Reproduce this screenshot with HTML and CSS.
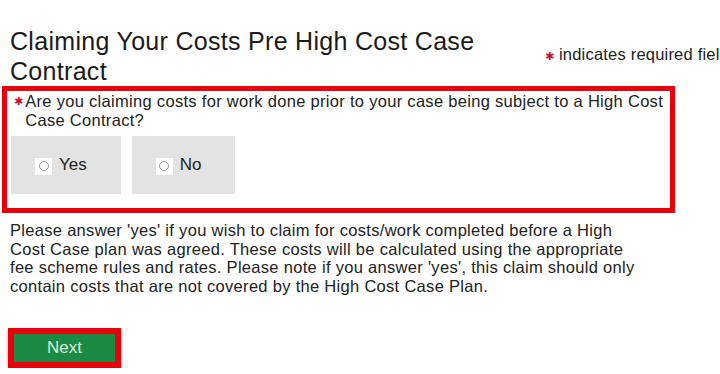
FILE: index.html
```html
<!DOCTYPE html>
<html>
<head>
  <title>Claiming Your Costs Pre High Cost Case Contract</title>
  <link rel="stylesheet" href="styles.css">
</head>
<body>
  <div class="header">
    <h1 class="title">Claiming Your Costs Pre High Cost Case Contract</h1>
    <div class="required-note"><span class="star">&#10033;</span> indicates required field</div>
  </div>

  <div class="question-box">
    <div class="question">
      <span class="star">&#10033;</span>
      <span>Are you claiming costs for work done prior to your case being subject to a High Cost Case Contract?</span>
    </div>
    <div class="options">
      <label class="option"><span class="radio"><span class="dot"></span></span>Yes</label>
      <label class="option"><span class="radio"><span class="dot"></span></span>No</label>
    </div>
  </div>

  <p class="help">Please answer 'yes' if you wish to claim for costs/work completed before a High Cost Case plan was agreed. These costs will be calculated using the appropriate fee scheme rules and rates. Please note if you answer 'yes', this claim should only contain costs that are not covered by the High Cost Case Plan.</p>

  <div class="actions">
    <button class="next">Next</button>
  </div>
</body>
</html>
```

FILE: styles.css
```css
body {
  margin: 0;
  padding: 0 0 0 2px;
  font-family: 'Liberation Sans', Arial, sans-serif;
  color: #222;
  background-color: #fff;
  overflow: hidden;
}

.header {
  display: flex;
  margin-top: 26px;
  padding-left: 8px;
}

.title {
  flex-shrink: 0;
  width: 490px;
  margin: 0;
  font-size: 25px;
  font-weight: normal;
  letter-spacing: 0.3px;
  line-height: 30px;
  color: #1a1a1a;
}

.required-note {
  flex-shrink: 0;
  margin-top: 19px;
  margin-left: 45px;
  font-size: 16.5px;
  letter-spacing: 0.2px;
  line-height: 18px;
  white-space: nowrap;
}

.star {
  color: #c8102e;
  font-family: 'DejaVu Sans', sans-serif;
  font-size: 11px;
  letter-spacing: 0;
}

.question-box {
  width: 659px;
  border: 5px solid #e8000b;
  padding: 1px 0 14px 4px;
}

.question {
  display: flex;
  align-items: flex-start;
  gap: 2px;
  margin-left: 3px;
  padding-right: 4px;
  font-size: 16.5px;
  letter-spacing: 0.3px;
  line-height: 19px;
}

.options {
  display: flex;
  gap: 11px;
  margin-top: 6px;
}

.option {
  display: flex;
  align-items: center;
  gap: 7px;
  height: 58px;
  padding: 0 34px 0 24px;
  background-color: #e3e3e3;
  font-size: 17px;
}

.radio {
  display: flex;
  align-items: center;
  justify-content: center;
  width: 17px;
  height: 17px;
  background-color: #fff;
  margin-top: 2px;
}

.dot {
  width: 8px;
  height: 8px;
  border: 1px solid #999;
  border-radius: 50%;
}

.help {
  width: 632px;
  margin: 8px 0 0 8px;
  font-size: 16.5px;
  letter-spacing: 0.3px;
  line-height: 18.5px;
}

.actions {
  margin-top: 33px;
  padding-left: 6px;
}

.next {
  width: 113px;
  height: 40px;
  border: 6px solid #e8000b;
  background-color: #1b8a44;
  color: #d8f5dc;
  font-family: 'Liberation Sans', Arial, sans-serif;
  font-size: 17px;
  box-shadow: 0 2px 3px rgba(0, 0, 0, 0.35);
  cursor: pointer;
}
```
